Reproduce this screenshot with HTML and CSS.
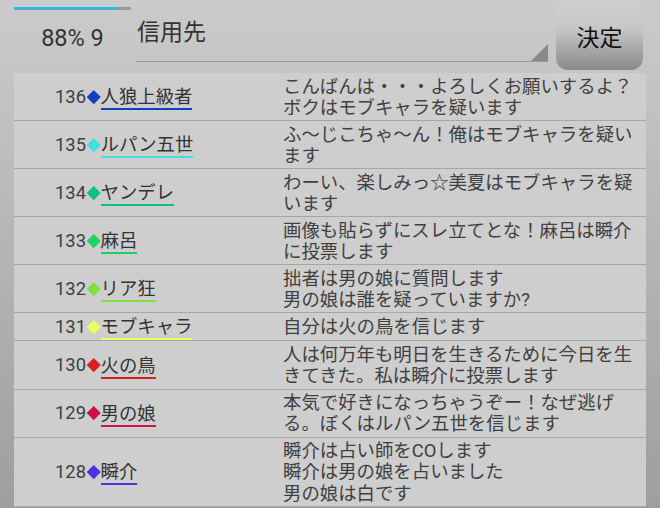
FILE: index.html
```html
<!DOCTYPE html>
<html lang="ja">
<head>
  <meta charset="UTF-8">
  <title>信用先</title>
  <link rel="stylesheet" href="styles.css">
</head>
<body>

  <!-- Top bar -->
  <header class="top">
    <div class="status">
      <div class="progress"><div class="progress-fill" style="width: 88%;"></div></div>
      <div class="status-text">88% 9</div>
    </div>
    <div class="spinner">信用先</div>
    <button class="decide">決定</button>
  </header>

  <!-- Log -->
  <div class="posts">
    <div class="post">
      <div class="who"><span class="no">136</span><span class="mark" style="background: #1040c0;"></span><span class="name" style="border-color: #1040c0;">人狼上級者</span></div>
      <div class="msg">こんばんは・・・よろしくお願いするよ？<br>ボクはモブキャラを疑います</div>
    </div>
    <div class="post">
      <div class="who"><span class="no">135</span><span class="mark" style="background: #40e0e0;"></span><span class="name" style="border-color: #40e0e0;">ルパン五世</span></div>
      <div class="msg">ふ～じこちゃ～ん！俺はモブキャラを疑います</div>
    </div>
    <div class="post">
      <div class="who"><span class="no">134</span><span class="mark" style="background: #10c080;"></span><span class="name" style="border-color: #10c080;">ヤンデレ</span></div>
      <div class="msg">わーい、楽しみっ☆美夏はモブキャラを疑います</div>
    </div>
    <div class="post">
      <div class="who"><span class="no">133</span><span class="mark" style="background: #20d060;"></span><span class="name" style="border-color: #20d060;">麻呂</span></div>
      <div class="msg">画像も貼らずにスレ立てとな！麻呂は瞬介に投票します</div>
    </div>
    <div class="post">
      <div class="who"><span class="no">132</span><span class="mark" style="background: #80e040;"></span><span class="name" style="border-color: #80e040;">リア狂</span></div>
      <div class="msg">拙者は男の娘に質問します<br>男の娘は誰を疑っていますか?</div>
    </div>
    <div class="post">
      <div class="who"><span class="no">131</span><span class="mark" style="background: #e8ff60;"></span><span class="name" style="border-color: #e8ff60;">モブキャラ</span></div>
      <div class="msg">自分は火の鳥を信じます</div>
    </div>
    <div class="post">
      <div class="who"><span class="no">130</span><span class="mark" style="background: #d82020;"></span><span class="name" style="border-color: #d82020;">火の鳥</span></div>
      <div class="msg">人は何万年も明日を生きるために今日を生きてきた。私は瞬介に投票します</div>
    </div>
    <div class="post">
      <div class="who"><span class="no">129</span><span class="mark" style="background: #d01048;"></span><span class="name" style="border-color: #d01048;">男の娘</span></div>
      <div class="msg">本気で好きになっちゃうぞー！なぜ逃げる。ぼくはルパン五世を信じます</div>
    </div>
    <div class="post">
      <div class="who"><span class="no">128</span><span class="mark" style="background: #5030e0;"></span><span class="name" style="border-color: #5030e0;">瞬介</span></div>
      <div class="msg">瞬介は占い師をCOします<br>瞬介は男の娘を占いました<br>男の娘は白です</div>
    </div>
  </div>

</body>
</html>
```

FILE: styles.css
```css
html {
  height: 100%;
}
body {
  margin: 0;
  min-height: 100%;
  font-family: Roboto, "Noto Sans CJK JP", sans-serif;
  color: #404040;
  background: linear-gradient(#cbcbcb, #9e9e9e);
  overflow: hidden;
}

/* top bar */
.top {
  display: flex;
  align-items: flex-start;
  height: 71px;
  padding: 0 17px 0 14px;
}
.status {
  width: 117px;
  padding-top: 7px;
}
.progress {
  height: 3px;
  background: #9a9a9a;
}
.progress-fill {
  height: 100%;
  background: #3cb2de;
}
.status-text {
  margin-top: 13px;
  text-align: center;
  font-size: 23.5px;
  line-height: 30px;
  color: #333;
}
.spinner {
  position: relative;
  flex: 1;
  height: 62px;
  box-sizing: border-box;
  margin: 0 8px 0 5px;
  padding: 18px 0 0 1px;
  border-bottom: 1px solid #999;
  font-size: 23px;
  line-height: 30px;
  color: #333;
}
.spinner::after {
  content: "";
  position: absolute;
  right: 0;
  bottom: 0;
  border-left: 17px solid transparent;
  border-bottom: 17px solid #888;
}
.decide {
  width: 87px;
  height: 69px;
  margin-top: 1px;
  border: none;
  border-radius: 12px;
  background: linear-gradient(#d0d0d0, #c6c6c6 40%, #8a8a8a);
  font-family: Roboto, "Noto Sans CJK JP", sans-serif;
  font-size: 23px;
  color: #111;
  padding: 0;
}

/* log */
.posts {
  margin: 2px 14px 0;
}
.post {
  display: grid;
  grid-template-columns: 266px 1fr;
  background: #cecece;
  border-bottom: 1px solid #a6a6a6;
  font-size: 18.4px;
  line-height: 21.3px;
}
.who {
  display: flex;
  align-items: center;
  padding-left: 41px;
}
.mark {
  display: inline-block;
  width: 9.5px;
  height: 9.5px;
  margin: 0 2.5px;
  transform: rotate(45deg);
}
.name {
  display: inline-block;
  line-height: 22px;
  border-bottom: 2px solid;
  color: #333;
  margin-top: 3px;
}
.msg {
  padding: 2.5px 8px 2px 3px;
}
```
